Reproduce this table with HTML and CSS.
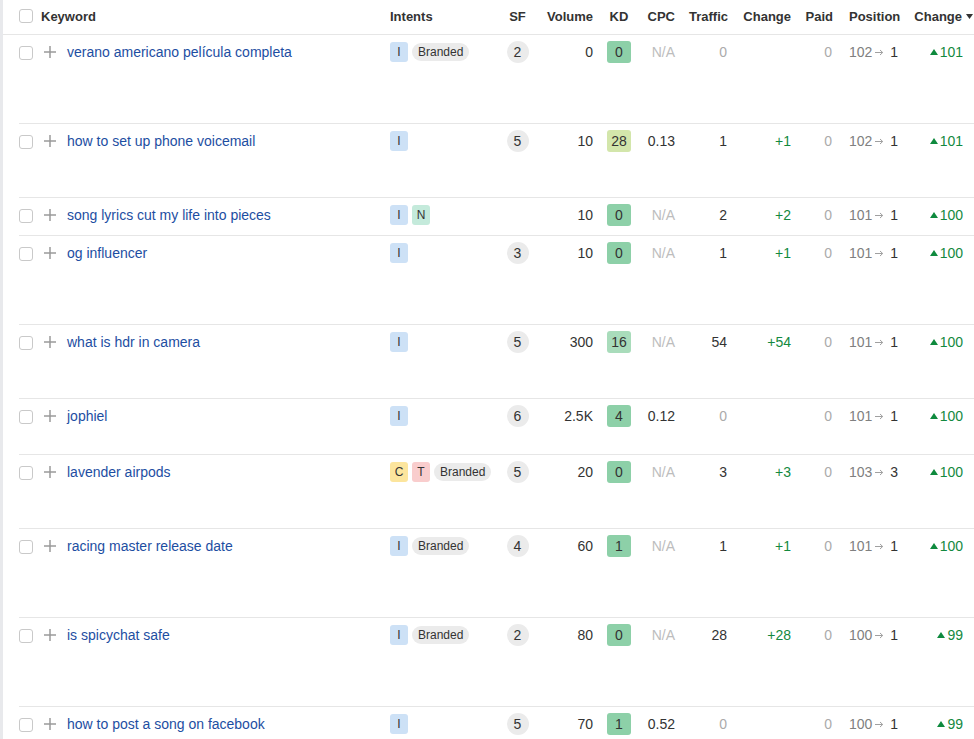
FILE: index.html
```html
<!DOCTYPE html>
<html lang="en">
<head>
<meta charset="utf-8">
<title>Keywords</title>
<link rel="stylesheet" href="styles.css">
</head>
<body>
<div class="page">
  <div class="head grid">
    <div class="c-kw"><span class="cb"></span><span class="hk">Keyword</span></div>
    <div class="c-in">Intents</div>
    <div class="c-sf">SF</div>
    <div class="c-r">Volume</div>
    <div class="c-kd">KD</div>
    <div class="c-r">CPC</div>
    <div class="c-r hpad">Traffic</div>
    <div class="c-r">Change</div>
    <div class="c-r hpad">Paid</div>
    <div class="c-pos">Position</div>
    <div class="c-ch head-ch">Change<svg class="sort" width="7" height="5" viewBox="0 0 7 5"><path d="M0 0h7L3.5 5z" fill="#333"/></svg></div>
  </div>

  <div class="row grid h89">
    <div class="c-kw"><span class="cb"></span><svg class="plus" width="12" height="12" viewBox="0 0 12 12"><path d="M6 0v12M0 6h12" stroke="#9a9a9a" stroke-width="1.5"/></svg><a class="kw">verano americano película completa</a></div>
    <div class="c-in"><span class="it i">I</span><span class="br">Branded</span></div>
    <div class="c-sf"><span class="sf">2</span></div>
    <div class="c-r">0</div>
    <div class="c-kd"><span class="kd g">0</span></div>
    <div class="c-r na">N/A</div>
    <div class="c-r gr">0</div>
    <div class="c-r up"></div>
    <div class="c-r gr">0</div>
    <div class="c-pos"><span class="from">102</span><svg class="arr" width="9" height="7" viewBox="0 0 9 7"><path d="M0 3.5h7.5M5 1l2.7 2.5L5 6" stroke="#a0a0a0" stroke-width="1" fill="none"/></svg><span class="to">1</span></div>
    <div class="c-ch"><svg class="tri" width="8" height="6" viewBox="0 0 8 6"><path d="M0 6L4 0l4 6z" fill="#0f8a3e"/></svg>101</div>
  </div>

  <div class="row grid h74">
    <div class="c-kw"><span class="cb"></span><svg class="plus" width="12" height="12" viewBox="0 0 12 12"><path d="M6 0v12M0 6h12" stroke="#9a9a9a" stroke-width="1.5"/></svg><a class="kw">how to set up phone voicemail</a></div>
    <div class="c-in"><span class="it i">I</span></div>
    <div class="c-sf"><span class="sf">5</span></div>
    <div class="c-r">10</div>
    <div class="c-kd"><span class="kd y">28</span></div>
    <div class="c-r">0.13</div>
    <div class="c-r">1</div>
    <div class="c-r up">+1</div>
    <div class="c-r gr">0</div>
    <div class="c-pos"><span class="from">102</span><svg class="arr" width="9" height="7" viewBox="0 0 9 7"><path d="M0 3.5h7.5M5 1l2.7 2.5L5 6" stroke="#a0a0a0" stroke-width="1" fill="none"/></svg><span class="to">1</span></div>
    <div class="c-ch"><svg class="tri" width="8" height="6" viewBox="0 0 8 6"><path d="M0 6L4 0l4 6z" fill="#0f8a3e"/></svg>101</div>
  </div>

  <div class="row grid h38">
    <div class="c-kw"><span class="cb"></span><svg class="plus" width="12" height="12" viewBox="0 0 12 12"><path d="M6 0v12M0 6h12" stroke="#9a9a9a" stroke-width="1.5"/></svg><a class="kw">song lyrics cut my life into pieces</a></div>
    <div class="c-in"><span class="it i">I</span><span class="it n">N</span></div>
    <div class="c-sf"></div>
    <div class="c-r">10</div>
    <div class="c-kd"><span class="kd g">0</span></div>
    <div class="c-r na">N/A</div>
    <div class="c-r">2</div>
    <div class="c-r up">+2</div>
    <div class="c-r gr">0</div>
    <div class="c-pos"><span class="from">101</span><svg class="arr" width="9" height="7" viewBox="0 0 9 7"><path d="M0 3.5h7.5M5 1l2.7 2.5L5 6" stroke="#a0a0a0" stroke-width="1" fill="none"/></svg><span class="to">1</span></div>
    <div class="c-ch"><svg class="tri" width="8" height="6" viewBox="0 0 8 6"><path d="M0 6L4 0l4 6z" fill="#0f8a3e"/></svg>100</div>
  </div>

  <div class="row grid h89">
    <div class="c-kw"><span class="cb"></span><svg class="plus" width="12" height="12" viewBox="0 0 12 12"><path d="M6 0v12M0 6h12" stroke="#9a9a9a" stroke-width="1.5"/></svg><a class="kw">og influencer</a></div>
    <div class="c-in"><span class="it i">I</span></div>
    <div class="c-sf"><span class="sf">3</span></div>
    <div class="c-r">10</div>
    <div class="c-kd"><span class="kd g">0</span></div>
    <div class="c-r na">N/A</div>
    <div class="c-r">1</div>
    <div class="c-r up">+1</div>
    <div class="c-r gr">0</div>
    <div class="c-pos"><span class="from">101</span><svg class="arr" width="9" height="7" viewBox="0 0 9 7"><path d="M0 3.5h7.5M5 1l2.7 2.5L5 6" stroke="#a0a0a0" stroke-width="1" fill="none"/></svg><span class="to">1</span></div>
    <div class="c-ch"><svg class="tri" width="8" height="6" viewBox="0 0 8 6"><path d="M0 6L4 0l4 6z" fill="#0f8a3e"/></svg>100</div>
  </div>

  <div class="row grid h74">
    <div class="c-kw"><span class="cb"></span><svg class="plus" width="12" height="12" viewBox="0 0 12 12"><path d="M6 0v12M0 6h12" stroke="#9a9a9a" stroke-width="1.5"/></svg><a class="kw">what is hdr in camera</a></div>
    <div class="c-in"><span class="it i">I</span></div>
    <div class="c-sf"><span class="sf">5</span></div>
    <div class="c-r">300</div>
    <div class="c-kd"><span class="kd lg">16</span></div>
    <div class="c-r na">N/A</div>
    <div class="c-r">54</div>
    <div class="c-r up">+54</div>
    <div class="c-r gr">0</div>
    <div class="c-pos"><span class="from">101</span><svg class="arr" width="9" height="7" viewBox="0 0 9 7"><path d="M0 3.5h7.5M5 1l2.7 2.5L5 6" stroke="#a0a0a0" stroke-width="1" fill="none"/></svg><span class="to">1</span></div>
    <div class="c-ch"><svg class="tri" width="8" height="6" viewBox="0 0 8 6"><path d="M0 6L4 0l4 6z" fill="#0f8a3e"/></svg>100</div>
  </div>

  <div class="row grid h56">
    <div class="c-kw"><span class="cb"></span><svg class="plus" width="12" height="12" viewBox="0 0 12 12"><path d="M6 0v12M0 6h12" stroke="#9a9a9a" stroke-width="1.5"/></svg><a class="kw">jophiel</a></div>
    <div class="c-in"><span class="it i">I</span></div>
    <div class="c-sf"><span class="sf">6</span></div>
    <div class="c-r">2.5K</div>
    <div class="c-kd"><span class="kd g">4</span></div>
    <div class="c-r">0.12</div>
    <div class="c-r gr">0</div>
    <div class="c-r up"></div>
    <div class="c-r gr">0</div>
    <div class="c-pos"><span class="from">101</span><svg class="arr" width="9" height="7" viewBox="0 0 9 7"><path d="M0 3.5h7.5M5 1l2.7 2.5L5 6" stroke="#a0a0a0" stroke-width="1" fill="none"/></svg><span class="to">1</span></div>
    <div class="c-ch"><svg class="tri" width="8" height="6" viewBox="0 0 8 6"><path d="M0 6L4 0l4 6z" fill="#0f8a3e"/></svg>100</div>
  </div>

  <div class="row grid h74">
    <div class="c-kw"><span class="cb"></span><svg class="plus" width="12" height="12" viewBox="0 0 12 12"><path d="M6 0v12M0 6h12" stroke="#9a9a9a" stroke-width="1.5"/></svg><a class="kw">lavender airpods</a></div>
    <div class="c-in"><span class="it c">C</span><span class="it t">T</span><span class="br">Branded</span></div>
    <div class="c-sf"><span class="sf">5</span></div>
    <div class="c-r">20</div>
    <div class="c-kd"><span class="kd g">0</span></div>
    <div class="c-r na">N/A</div>
    <div class="c-r">3</div>
    <div class="c-r up">+3</div>
    <div class="c-r gr">0</div>
    <div class="c-pos"><span class="from">103</span><svg class="arr" width="9" height="7" viewBox="0 0 9 7"><path d="M0 3.5h7.5M5 1l2.7 2.5L5 6" stroke="#a0a0a0" stroke-width="1" fill="none"/></svg><span class="to">3</span></div>
    <div class="c-ch"><svg class="tri" width="8" height="6" viewBox="0 0 8 6"><path d="M0 6L4 0l4 6z" fill="#0f8a3e"/></svg>100</div>
  </div>

  <div class="row grid h89">
    <div class="c-kw"><span class="cb"></span><svg class="plus" width="12" height="12" viewBox="0 0 12 12"><path d="M6 0v12M0 6h12" stroke="#9a9a9a" stroke-width="1.5"/></svg><a class="kw">racing master release date</a></div>
    <div class="c-in"><span class="it i">I</span><span class="br">Branded</span></div>
    <div class="c-sf"><span class="sf">4</span></div>
    <div class="c-r">60</div>
    <div class="c-kd"><span class="kd g">1</span></div>
    <div class="c-r na">N/A</div>
    <div class="c-r">1</div>
    <div class="c-r up">+1</div>
    <div class="c-r gr">0</div>
    <div class="c-pos"><span class="from">101</span><svg class="arr" width="9" height="7" viewBox="0 0 9 7"><path d="M0 3.5h7.5M5 1l2.7 2.5L5 6" stroke="#a0a0a0" stroke-width="1" fill="none"/></svg><span class="to">1</span></div>
    <div class="c-ch"><svg class="tri" width="8" height="6" viewBox="0 0 8 6"><path d="M0 6L4 0l4 6z" fill="#0f8a3e"/></svg>100</div>
  </div>

  <div class="row grid h89">
    <div class="c-kw"><span class="cb"></span><svg class="plus" width="12" height="12" viewBox="0 0 12 12"><path d="M6 0v12M0 6h12" stroke="#9a9a9a" stroke-width="1.5"/></svg><a class="kw">is spicychat safe</a></div>
    <div class="c-in"><span class="it i">I</span><span class="br">Branded</span></div>
    <div class="c-sf"><span class="sf">2</span></div>
    <div class="c-r">80</div>
    <div class="c-kd"><span class="kd g">0</span></div>
    <div class="c-r na">N/A</div>
    <div class="c-r">28</div>
    <div class="c-r up">+28</div>
    <div class="c-r gr">0</div>
    <div class="c-pos"><span class="from">100</span><svg class="arr" width="9" height="7" viewBox="0 0 9 7"><path d="M0 3.5h7.5M5 1l2.7 2.5L5 6" stroke="#a0a0a0" stroke-width="1" fill="none"/></svg><span class="to">1</span></div>
    <div class="c-ch"><svg class="tri" width="8" height="6" viewBox="0 0 8 6"><path d="M0 6L4 0l4 6z" fill="#0f8a3e"/></svg>99</div>
  </div>

  <div class="row grid h89">
    <div class="c-kw"><span class="cb"></span><svg class="plus" width="12" height="12" viewBox="0 0 12 12"><path d="M6 0v12M0 6h12" stroke="#9a9a9a" stroke-width="1.5"/></svg><a class="kw">how to post a song on facebook</a></div>
    <div class="c-in"><span class="it i">I</span></div>
    <div class="c-sf"><span class="sf">5</span></div>
    <div class="c-r">70</div>
    <div class="c-kd"><span class="kd g">1</span></div>
    <div class="c-r">0.52</div>
    <div class="c-r gr">0</div>
    <div class="c-r up"></div>
    <div class="c-r gr">0</div>
    <div class="c-pos"><span class="from">100</span><svg class="arr" width="9" height="7" viewBox="0 0 9 7"><path d="M0 3.5h7.5M5 1l2.7 2.5L5 6" stroke="#a0a0a0" stroke-width="1" fill="none"/></svg><span class="to">1</span></div>
    <div class="c-ch"><svg class="tri" width="8" height="6" viewBox="0 0 8 6"><path d="M0 6L4 0l4 6z" fill="#0f8a3e"/></svg>99</div>
  </div>
</div>
</body>
</html>
```

FILE: styles.css
```css
* { box-sizing: border-box; }
html, body { margin: 0; padding: 0; background: #fff; }
body {
  font-family: "Liberation Sans", Arial, sans-serif;
  font-size: 14px;
  color: #333;
  overflow: hidden;
}
.page {
  border-left: 3px solid #e8e9ec;
  height: 739px;
  width: 974px;
  overflow: hidden;
}
.grid {
  display: grid;
  grid-template-columns: 371px 110px 35px 58px 52px 30px 53px 63px 42px 72px 69px;
}
.head {
  height: 35px;
  padding-left: 16px;
  padding-bottom: 2px;
  border-bottom: 1px solid #e6e6e6;
  align-items: center;
  font-size: 13px;
  font-weight: bold;
  color: #333;
}
.head > div { display: flex; align-items: center; }
.row {
  margin-left: 16px;
  border-bottom: 1px solid #e6e6e6;
  padding-top: 6px;
  align-items: start;
}
.row > div { height: 22px; display: flex; align-items: center; }
.h89 { height: 89px; }
.h74 { height: 74px; }
.h38 { height: 38px; }
.h56 { height: 56px; }

.cb {
  width: 14px; height: 14px;
  border: 1px solid #c9c9c9;
  border-radius: 3px;
  background: #fff;
  flex: none;
}
.head .cb { margin-right: 8px; }
.row .cb { margin-top: 1px; }
.plus { margin: 0 11px; flex: none; }
.kw { color: #1d4ea2; white-space: nowrap; }
.hk { color: #333; }

.c-in { gap: 4px; }
.it {
  display: inline-flex; align-items: center; justify-content: center;
  width: 18px; height: 20px;
  border-radius: 3px;
  font-size: 12px;
  color: #333;
}
.it.i { background: #cde1f6; }
.it.n { background: #c4eadb; }
.it.c { background: #fce59d; }
.it.t { background: #f9cdcd; }
.br {
  display: inline-flex; align-items: center;
  height: 18px;
  padding: 0 6px;
  border-radius: 9px;
  background: #ebebeb;
  font-size: 12px;
  color: #333;
}

.c-sf { justify-content: center; }
.sf {
  width: 22px; height: 22px;
  border-radius: 50%;
  background: #ebebeb;
  display: inline-flex; align-items: center; justify-content: center;
  font-size: 14px;
}
.c-r { justify-content: flex-end; }
.c-kd { justify-content: center; }
.kd {
  width: 24px; height: 22px;
  border-radius: 3px;
  display: inline-flex; align-items: center; justify-content: center;
  font-size: 14px;
  color: #333;
}
.kd.g { background: #8dd0a8; }
.kd.lg { background: #a9dcbb; }
.kd.y { background: #d3e6ab; }
.na { color: #bdbdbd; }
.gr { color: #ababab; }
.up { color: #13893f; }
.head .hpad { padding-right: 0; }
.row .c-r:nth-child(7), .row .c-r:nth-child(9) { padding-right: 1px; }

.c-pos { padding-left: 16px; }
.from { color: #808080; }
.arr { margin: 0 6px 0 3px; flex: none; }
.to { color: #333; }

.c-ch { justify-content: flex-end; padding-right: 11px; color: #13893f; }
.tri { margin-right: 2px; flex: none; }
.head-ch { padding-right: 1px; color: #333; }
.sort { margin-left: 4px; flex: none; }
```
